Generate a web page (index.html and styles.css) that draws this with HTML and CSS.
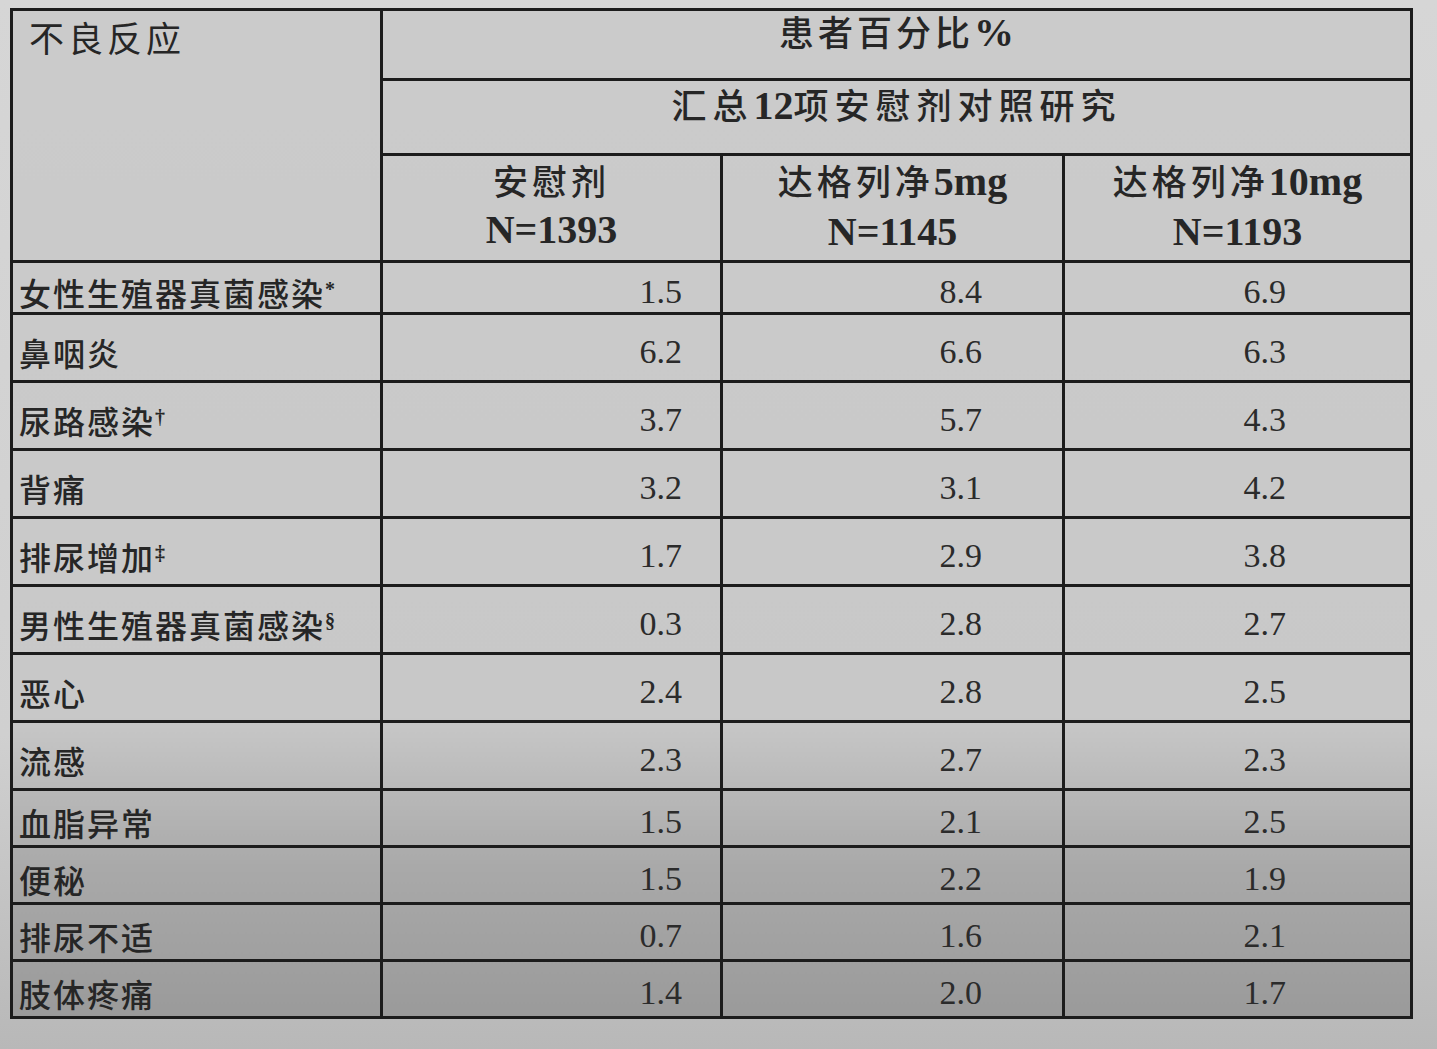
FILE: index.html
```html
<!DOCTYPE html>
<html lang="zh">
<head>
<meta charset="utf-8">
<title>不良反应</title>
<link rel="stylesheet" href="styles.css">
</head>
<body>
<div class="sheet">
<table class="ae">
  <colgroup>
    <col class="c-label"><col class="c-a"><col class="c-b"><col class="c-c">
  </colgroup>
  <thead>
    <tr class="h1">
      <th rowspan="3" class="corner">不良反应</th>
      <th colspan="3">患者百分比<span class="lat">%</span></th>
    </tr>
    <tr class="h2">
      <th colspan="3">汇总<span class="lat">12</span>项安慰剂对照研究</th>
    </tr>
    <tr class="h3">
      <th>安慰剂<br><span class="lat">N=1393</span></th>
      <th>达格列净<span class="lat">5mg</span><br><span class="lat">N=1145</span></th>
      <th>达格列净<span class="lat">10mg</span><br><span class="lat">N=1193</span></th>
    </tr>
  </thead>
  <tbody>
    <tr class="r1"><td class="lab">女性生殖器真菌感染<sup>*</sup></td><td class="n a">1.5</td><td class="n b">8.4</td><td class="n c">6.9</td></tr>
    <tr><td class="lab">鼻咽炎</td><td class="n a">6.2</td><td class="n b">6.6</td><td class="n c">6.3</td></tr>
    <tr><td class="lab">尿路感染<sup>†</sup></td><td class="n a">3.7</td><td class="n b">5.7</td><td class="n c">4.3</td></tr>
    <tr><td class="lab">背痛</td><td class="n a">3.2</td><td class="n b">3.1</td><td class="n c">4.2</td></tr>
    <tr><td class="lab">排尿增加<sup>‡</sup></td><td class="n a">1.7</td><td class="n b">2.9</td><td class="n c">3.8</td></tr>
    <tr><td class="lab">男性生殖器真菌感染<sup>§</sup></td><td class="n a">0.3</td><td class="n b">2.8</td><td class="n c">2.7</td></tr>
    <tr><td class="lab">恶心</td><td class="n a">2.4</td><td class="n b">2.8</td><td class="n c">2.5</td></tr>
    <tr><td class="lab">流感</td><td class="n a">2.3</td><td class="n b">2.7</td><td class="n c">2.3</td></tr>
    <tr class="sm"><td class="lab">血脂异常</td><td class="n a">1.5</td><td class="n b">2.1</td><td class="n c">2.5</td></tr>
    <tr class="sm"><td class="lab">便秘</td><td class="n a">1.5</td><td class="n b">2.2</td><td class="n c">1.9</td></tr>
    <tr class="sm"><td class="lab">排尿不适</td><td class="n a">0.7</td><td class="n b">1.6</td><td class="n c">2.1</td></tr>
    <tr class="sm"><td class="lab">肢体疼痛</td><td class="n a">1.4</td><td class="n b">2.0</td><td class="n c">1.7</td></tr>
  </tbody>
</table>
</div>
</body>
</html>
```

FILE: styles.css
```css
html, body {
  margin: 0;
  padding: 0;
}
body {
  width: 1437px;
  height: 1049px;
  overflow: hidden;
  background: linear-gradient(180deg, #d6d6d6 0%, #d0d0d0 70%, #b8b8b8 100%);
  font-family: "Liberation Serif", "Noto Sans CJK SC", serif;
  color: #1e1e1e;
}
.sheet {
  padding: 8px 0 0 10px;
}
.ae {
  border-collapse: collapse;
  width: 1400px;
  table-layout: fixed;
  background: linear-gradient(180deg, #cbcbcb 0%, #c8c8c8 70%, #a9a9a9 85%, #9a9a9a 100%);
}
.c-label { width: 370px; }
.c-a { width: 340px; }
.c-b { width: 342px; }
.c-c { width: 348px; }

.ae th, .ae td {
  border: 3px solid #1c1c1c;
  padding: 0;
}
.ae th {
  font-family: "Noto Sans CJK SC", sans-serif;
  font-weight: 500;
  font-size: 35px;
  letter-spacing: 4px;
  color: #262626;
  text-align: center;
  line-height: 1.45;
}
.ae th .lat {
  font-family: "Liberation Serif", serif;
  font-weight: 700;
  font-size: 40px;
  letter-spacing: 0;
}
.h1 { height: 70px; }
.h2 { height: 75px; }
.h3 { height: 107px; }
.h1 th { vertical-align: top; padding-top: 0; line-height: 40px; }
.h2 th { vertical-align: top; padding-top: 0; line-height: 46px; letter-spacing: 6px; }
.h3 th { vertical-align: top; padding-top: 0; line-height: 48px; }
.ae th.corner {
  text-align: left;
  vertical-align: top;
  padding: 4px 0 0 16px;
  line-height: 44px;
  letter-spacing: 4px;
  font-weight: 400;
}

.ae tbody tr { height: 68px; }
.ae tbody tr.r1 { height: 52px; }
.ae tbody tr.sm { height: 57px; }

.lab {
  font-family: "Noto Sans CJK SC", sans-serif;
  font-weight: 500;
  font-size: 32px;
  line-height: 40px;
  letter-spacing: 2px;
  color: #262626;
  padding: 8px 0 0 6px !important;
  white-space: nowrap;
}
.lab sup {
  font-family: "Liberation Serif", serif;
  font-size: 20px;
  font-weight: 700;
  vertical-align: 10px;
  line-height: 0;
}
.n {
  font-size: 34px;
  line-height: 40px;
  text-align: right;
  padding-top: 8px !important;
  color: #2b2b2b;
}
.n.a { padding-right: 38px !important; }
.n.b { padding-right: 80px !important; }
.n.c { padding-right: 124px !important; }
```
